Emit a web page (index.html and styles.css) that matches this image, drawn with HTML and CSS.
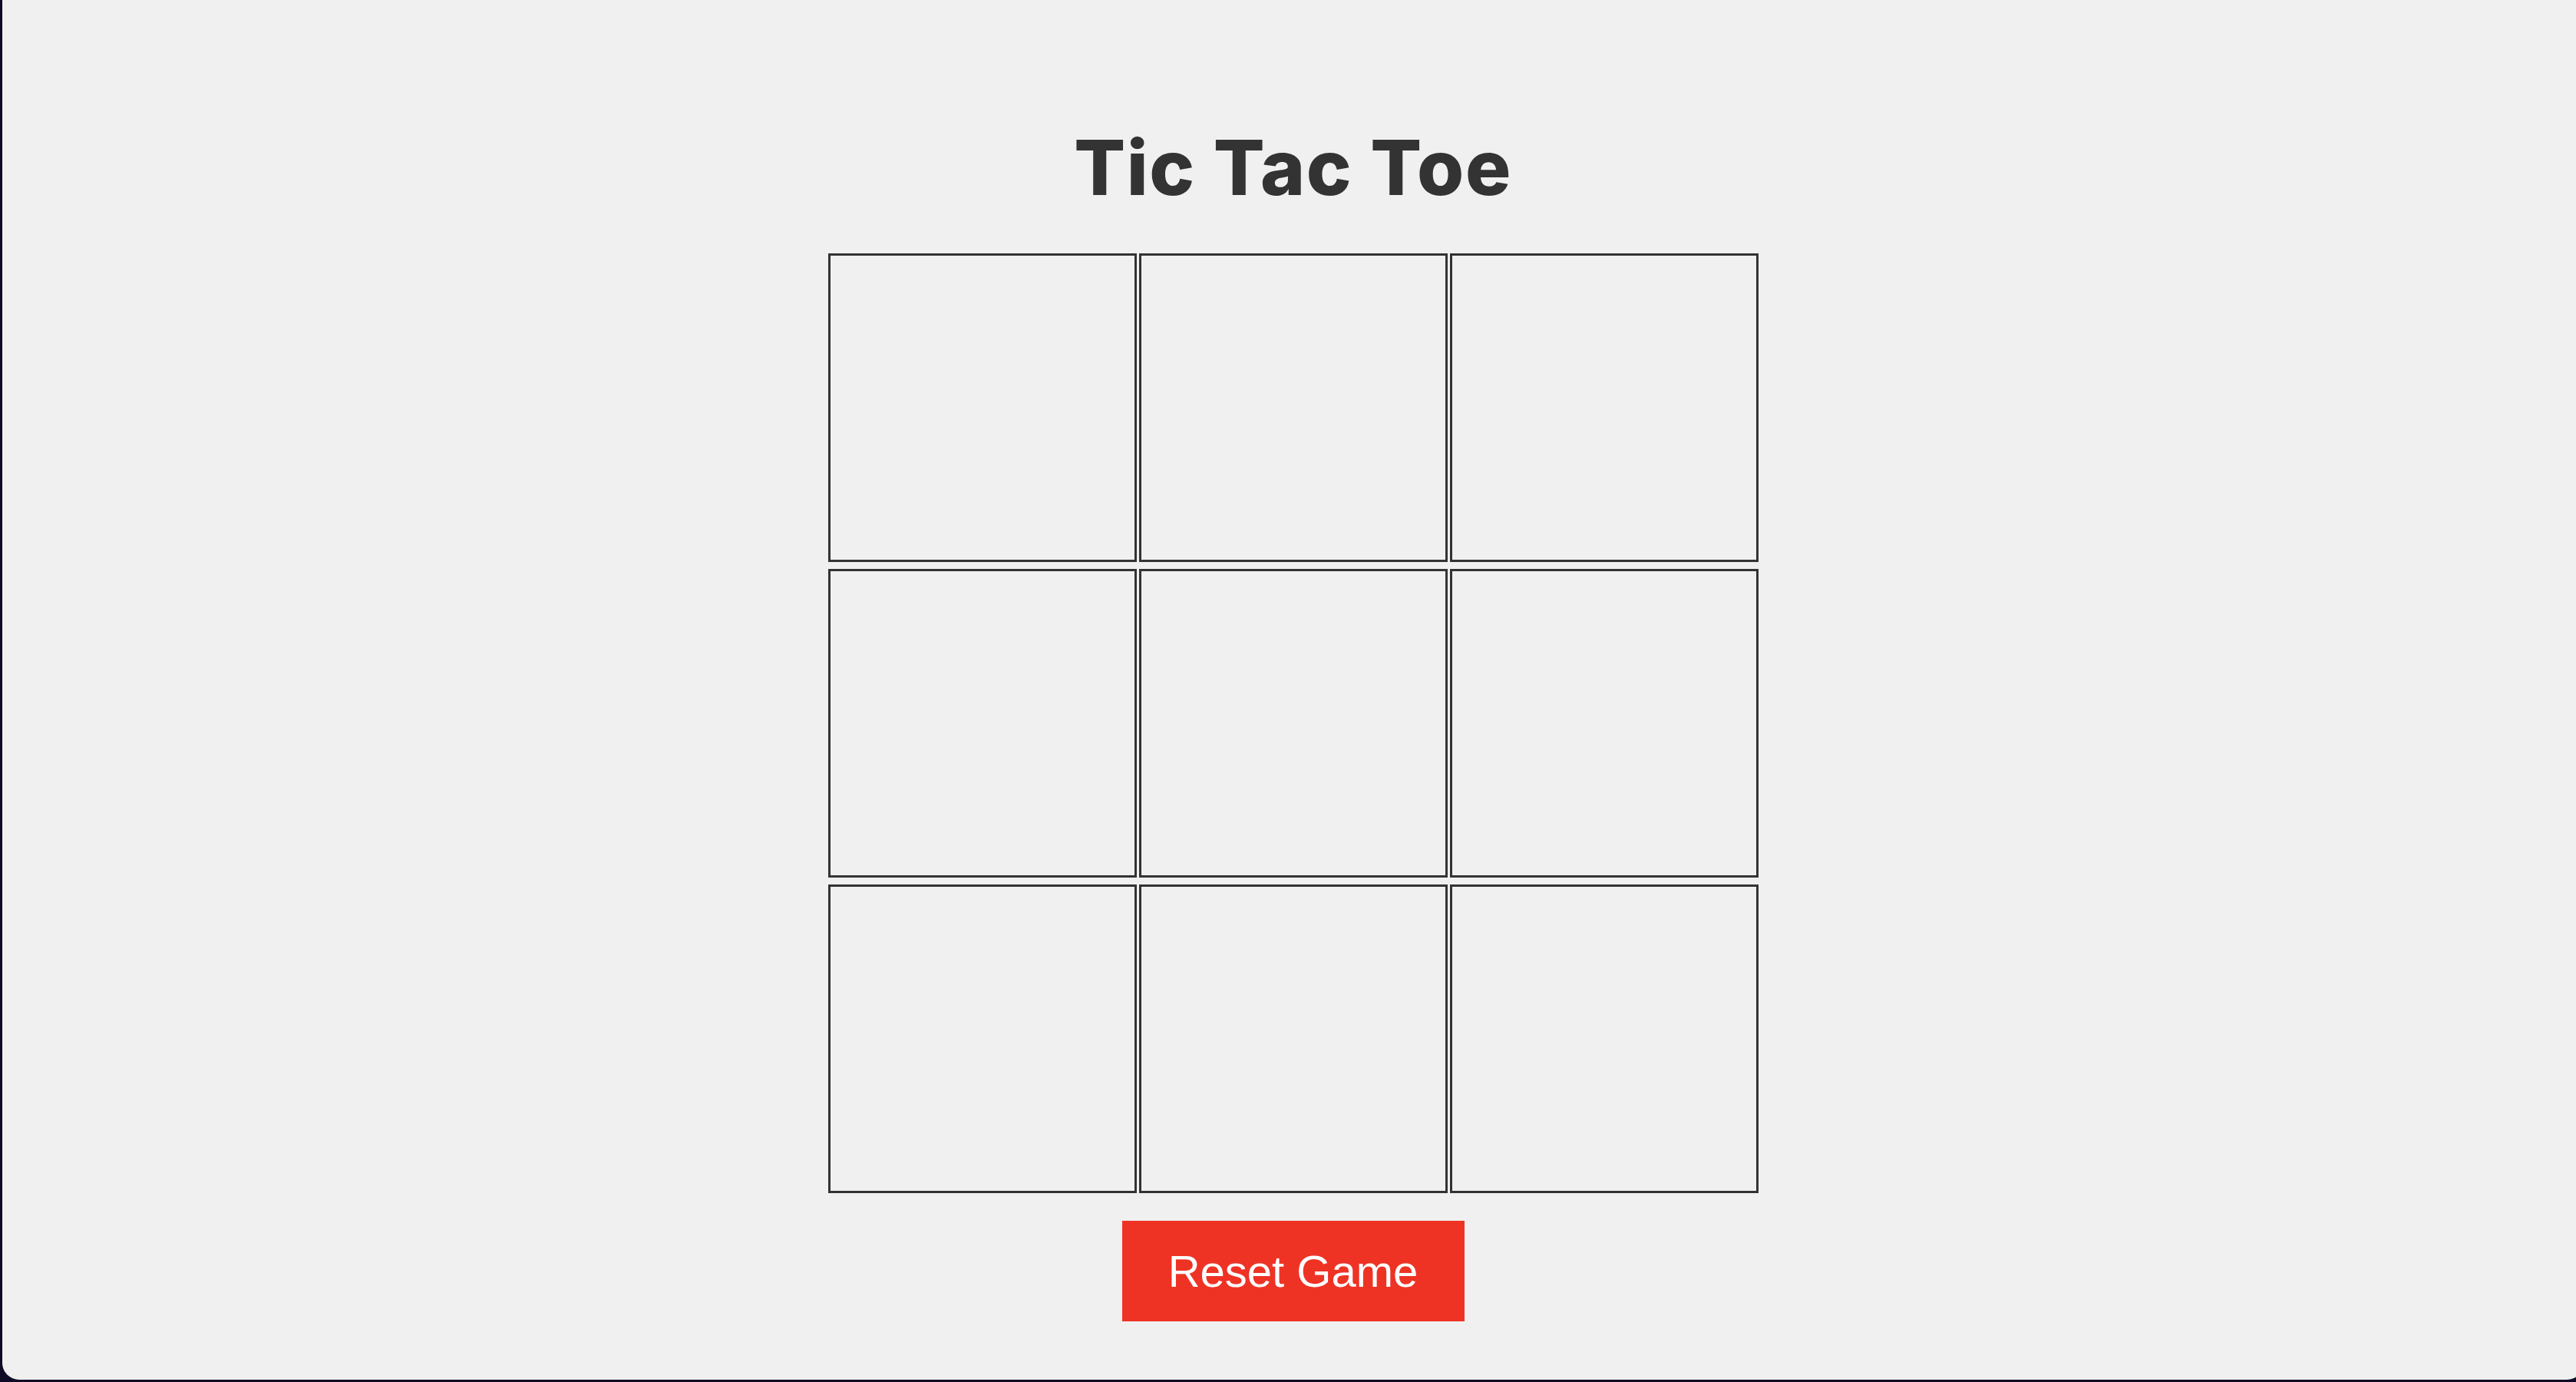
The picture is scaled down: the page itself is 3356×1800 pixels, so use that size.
FILE: index.html
```html
<!DOCTYPE html>
<html lang="en">
<head>
<meta charset="utf-8">
<title>Tic Tac Toe</title>
<link rel="stylesheet" href="styles.css">
</head>
<body>
<div class="window">
  <h1 class="title">Tic Tac Toe</h1>
  <div class="board">
    <div class="cell"></div>
    <div class="cell"></div>
    <div class="cell"></div>
    <div class="cell"></div>
    <div class="cell"></div>
    <div class="cell"></div>
    <div class="cell"></div>
    <div class="cell"></div>
    <div class="cell"></div>
  </div>
  <button class="reset">Reset Game</button>
</div>
</body>
</html>
```

FILE: styles.css
```css
html, body {
  margin: 0;
  padding: 0;
}
body {
  background: #0e0b26;
  width: 3356px;
  height: 1800px;
  overflow: hidden;
}
.window {
  margin-left: 3px;
  width: 3363px;
  height: 1797px;
  background: #f0f0f0;
  border-radius: 0 0 22px 22px;
  display: flex;
  flex-direction: column;
  align-items: center;
  box-sizing: border-box;
  padding-top: 150px;
}
.title {
  margin: 0;
  font-family: Inter, "Open Sans", sans-serif;
  font-weight: 800;
  font-size: 99px;
  line-height: 136px;
  color: #333333;
  letter-spacing: 1.5px;
}
.board {
  margin-top: 44px;
  display: grid;
  grid-template-columns: repeat(3, 402px);
  grid-auto-rows: 402px;
  column-gap: 3px;
  row-gap: 9px;
}
.cell {
  box-sizing: border-box;
  border: 3px solid #333333;
}
.reset {
  margin-top: 36px;
  width: 446px;
  height: 131px;
  background: #ee3325;
  color: #ffffff;
  border: none;
  font-family: "Liberation Sans", Arial, sans-serif;
  font-size: 58px;
  padding: 0;
}
```
